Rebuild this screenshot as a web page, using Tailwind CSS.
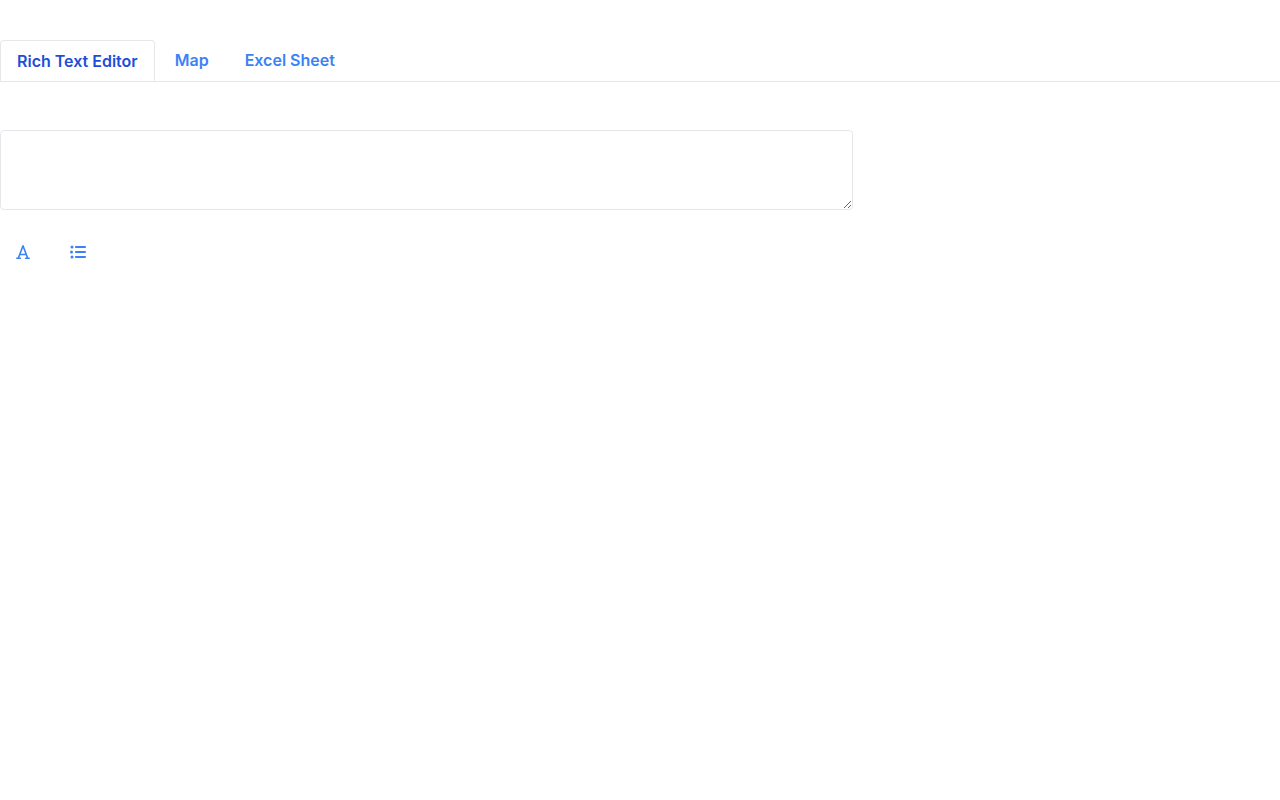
<!DOCTYPE html>
<html lang="en">
<head>
  <meta charset="UTF-8" />
  <meta name="viewport" content="width=device-width, initial-scale=1.0" />
  <title>Rich Text Editor</title>
  <script src="https://cdn.jsdelivr.net/npm/@tailwindcss/browser@4"></script>
</head>
<body class="bg-white font-['Inter',sans-serif] text-base">

  <!-- Tabs -->
  <nav class="pt-10">
    <ul class="flex border-b border-[#e5e7eb]">
      <li class="mr-1">
        <a href="#editor" class="block rounded-t border-x border-t border-[#e5e7eb] bg-white px-4 py-2 font-semibold text-[#1d4ed8]">Rich Text Editor</a>
      </li>
      <li class="mr-1">
        <a href="#map" class="block px-4 py-2 font-semibold text-[#3b82f6] hover:text-[#1e40af]">Map</a>
      </li>
      <li class="mr-1">
        <a href="#sheet" class="block px-4 py-2 font-semibold text-[#3b82f6] hover:text-[#1e40af]">Excel Sheet</a>
      </li>
    </ul>
  </nav>

  <!-- Editor -->
  <main id="editor" class="pt-12">
    <textarea id="content" aria-label="Content" class="block h-20 w-2/3 resize rounded border border-[#e5e7eb] bg-white p-2"></textarea>

    <div class="mt-6 flex gap-2">
      <button type="button" aria-label="Font" class="px-4 py-1.5 text-[#3b82f6]">
        <svg class="my-1 h-4 w-3.5" viewBox="0 0 14 16" fill="none" stroke="currentColor" stroke-width="1.6" stroke-linecap="round" stroke-linejoin="round">
          <path d="M2.4 14 7 1.8l4.6 12.2M4 10.5h6M.8 14.2h3.5M9.7 14.2h3.5"/>
        </svg>
      </button>
      <button type="button" aria-label="Bulleted list" class="px-4 py-1.5 text-[#3b82f6]">
        <svg class="my-1 size-4" viewBox="0 0 512 512" fill="currentColor">
          <path d="M64 144a48 48 0 1 0 0-96 48 48 0 1 0 0 96zM192 64c-17.7 0-32 14.3-32 32s14.3 32 32 32l288 0c17.7 0 32-14.3 32-32s-14.3-32-32-32L192 64zm0 160c-17.7 0-32 14.3-32 32s14.3 32 32 32l288 0c17.7 0 32-14.3 32-32s-14.3-32-32-32l-288 0zm0 160c-17.7 0-32 14.3-32 32s14.3 32 32 32l288 0c17.7 0 32-14.3 32-32s-14.3-32-32-32l-288 0zM64 464a48 48 0 1 0 0-96 48 48 0 1 0 0 96zm32-208a48 48 0 1 0-96 0 48 48 0 1 0 96 0z"/>
        </svg>
      </button>
    </div>
  </main>

</body>
</html>
